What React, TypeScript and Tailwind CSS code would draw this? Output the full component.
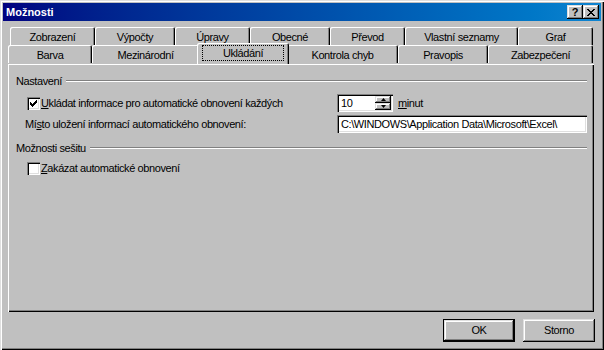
import React from 'react'

const font = "font-['Liberation_Sans',Arial,sans-serif]"

const raised =
  'shadow-[inset_-1px_-1px_0_#000,inset_1px_1px_0_#dfdfdf,inset_-2px_-2px_0_#808080,inset_2px_2px_0_#fff]'
const sunken =
  'shadow-[inset_1px_1px_0_#808080,inset_2px_2px_0_#000,inset_-1px_-1px_0_#fff,inset_-2px_-2px_0_#dfdfdf]'

const rowOne = [
  { label: 'Zobrazení', w: 'w-[85px]' },
  { label: 'Výpočty', w: 'w-[80px]' },
  { label: 'Úpravy', w: 'w-[75px]' },
  { label: 'Obecné', w: 'w-[80px]' },
  { label: 'Převod', w: 'w-[75px]' },
  { label: 'Vlastní seznamy', w: 'w-[113px]' },
  { label: 'Graf', w: 'w-[75px]' },
]

const rowTwo = [
  { label: 'Barva', w: 'w-[84px]' },
  { label: 'Mezinárodní', w: 'w-[107px]' },
  { label: 'Ukládání', w: 'w-[92px]', selected: true },
  { label: 'Kontrola chyb', w: 'w-[111px]' },
  { label: 'Pravopis', w: 'w-[90px]' },
  { label: 'Zabezpečení', w: 'w-[105px]' },
]

function Tab({ label, w, selected }: { label: string; w: string; selected?: boolean }) {
  if (selected) {
    return (
      <div
        className={`${w} relative z-10 -mx-[2px] -mt-[2px] flex h-[21px] items-start justify-center rounded-t-[2px] bg-[#c0c0c0] pt-[2px] shadow-[inset_1px_1px_0_#fff,inset_-1px_0_0_#000,inset_-2px_0_0_#808080]`}
      >
        <span className="flex h-[16px] w-[82px] items-center justify-center outline-1 outline-dotted outline-black -outline-offset-1">
          {label}
        </span>
      </div>
    )
  }
  return (
    <div
      className={`${w} flex h-[18px] items-center justify-center rounded-t-[2px] pt-[2px] shadow-[inset_1px_1px_0_#fff,inset_-1px_0_0_#000,inset_-2px_0_0_#808080]`}
    >
      {label}
    </div>
  )
}

function Checkbox({ checked }: { checked?: boolean }) {
  return (
    <span className={`flex h-[13px] w-[13px] shrink-0 items-center justify-center bg-white ${sunken}`}>
      {checked && (
        <svg width="7" height="7" viewBox="0 0 7 7" shapeRendering="crispEdges">
          <path d="M6 0h1v1H6zM5 1h2v1H5zM0 2h1v1H0zM4 2h3v1H4zM0 3h2v1H0zM3 3h3v1H3zM0 4h5v1H0zM1 5h3v1H1zM2 6h1v1H2z" fill="#000" />
        </svg>
      )}
    </span>
  )
}

function GroupTitle({ title }: { title: string }) {
  return (
    <div className="flex h-[14px] items-center gap-[4px] pr-[7px]">
      <span>{title}</span>
      <div className="h-[2px] flex-1 border-t border-b border-t-[#808080] border-b-white" />
    </div>
  )
}

function SpinBox() {
  return (
    <div className={`flex h-[18px] w-[56px] items-stretch bg-white p-[2px] ${sunken}`}>
      <span className="flex-1 pl-[2px] leading-[14px]">10</span>
      <div className="flex w-[16px] flex-col">
        <span className={`flex flex-1 items-center justify-center bg-[#c0c0c0] ${raised}`}>
          <svg width="5" height="3" viewBox="0 0 5 3">
            <path d="M2.5 0L5 3H0z" fill="#000" />
          </svg>
        </span>
        <span className={`flex flex-1 items-center justify-center bg-[#c0c0c0] ${raised}`}>
          <svg width="5" height="3" viewBox="0 0 5 3">
            <path d="M0 0h5L2.5 3z" fill="#000" />
          </svg>
        </span>
      </div>
    </div>
  )
}

function Button({ label, isDefault }: { label: string; isDefault?: boolean }) {
  return (
    <div className={`h-[23px] w-[72px] ${isDefault ? 'border border-black' : ''}`}>
      <div className={`flex h-full w-full items-center justify-center bg-[#c0c0c0] ${raised}`}>{label}</div>
    </div>
  )
}

export default function App() {
  return (
    <div
      className={`${font} flex h-[350px] w-[604px] flex-col bg-[#c0c0c0] p-[3px] text-[11px] tracking-[-0.4px] text-black shadow-[inset_1px_1px_0_#dfdfdf,inset_2px_2px_0_#fff,inset_-1px_-1px_0_#000,inset_-2px_-2px_0_#808080]`}
    >
      <div className="flex h-[18px] items-center bg-linear-to-r from-[#000080] to-[#1084d0] pl-[3px] pr-[2px]">
        <span className="flex-1 text-[11px] font-bold tracking-normal text-white">Možnosti</span>
        <div className="flex">
          <span className={`flex h-[14px] w-[16px] items-center justify-center bg-[#c0c0c0] text-[11px] font-bold leading-none ${raised}`}>
            ?
          </span>
          <span className={`flex h-[14px] w-[16px] items-center justify-center bg-[#c0c0c0] ${raised}`}>
            <svg width="8" height="7" viewBox="0 0 8 7" shapeRendering="crispEdges">
              <path
                d="M0 0h2v1H0zM6 0h2v1H6zM1 1h2v1H1zM5 1h2v1H5zM2 2h4v1H2zM3 3h2v1H3zM2 4h4v1H2zM1 5h2v1H1zM5 5h2v1H5zM0 6h2v1H0zM6 6h2v1H6z"
                fill="#000"
              />
            </svg>
          </span>
        </div>
      </div>

      <div className="flex flex-1 flex-col pl-[5px] pr-[7px] pt-[6px]">
        <div className="flex pl-[2px]">
          {rowOne.map((t) => (
            <Tab key={t.label} label={t.label} w={t.w} />
          ))}
        </div>
        <div className="flex">
          {rowTwo.map((t) => (
            <Tab key={t.label} label={t.label} w={t.w} selected={t.selected} />
          ))}
        </div>

        <div className="flex h-[248px] flex-col pl-[8px] pt-[10px] shadow-[inset_1px_1px_0_#fff,inset_-1px_-1px_0_#000,inset_-2px_-2px_0_#808080]">
          <GroupTitle title="Nastavení" />

          <div className="mt-[6px] flex h-[18px] items-center">
            <div className="flex w-[321px] items-center gap-[1px] pl-[11px]">
              <Checkbox checked />
              <span>
                <span className="underline">U</span>kládat informace pro automatické obnovení každých
              </span>
            </div>
            <SpinBox />
            <span className="ml-[5px]">
              <span className="underline">m</span>inut
            </span>
          </div>

          <div className="mt-[3px] flex h-[18px] items-center">
            <span className="w-[321px] pl-[9px]">
              Mí<span className="underline">s</span>to uložení informací automatického obnovení:
            </span>
            <div className={`flex h-[18px] w-[250px] items-center bg-white pl-[4px] ${sunken}`}>
              C:\WINDOWS\Application Data\Microsoft\Excel\
            </div>
          </div>

          <div className="mt-[8px]">
            <GroupTitle title="Možnosti sešitu" />
          </div>

          <div className="mt-[6px] flex h-[14px] items-center gap-[1px] pl-[11px]">
            <Checkbox />
            <span>
              <span className="underline">Z</span>akázat automatické obnovení
            </span>
          </div>
        </div>

        <div className="mr-[-1px] mt-[7px] flex justify-end gap-[8px]">
          <Button label="OK" isDefault />
          <Button label="Storno" />
        </div>
      </div>
    </div>
  )
}
